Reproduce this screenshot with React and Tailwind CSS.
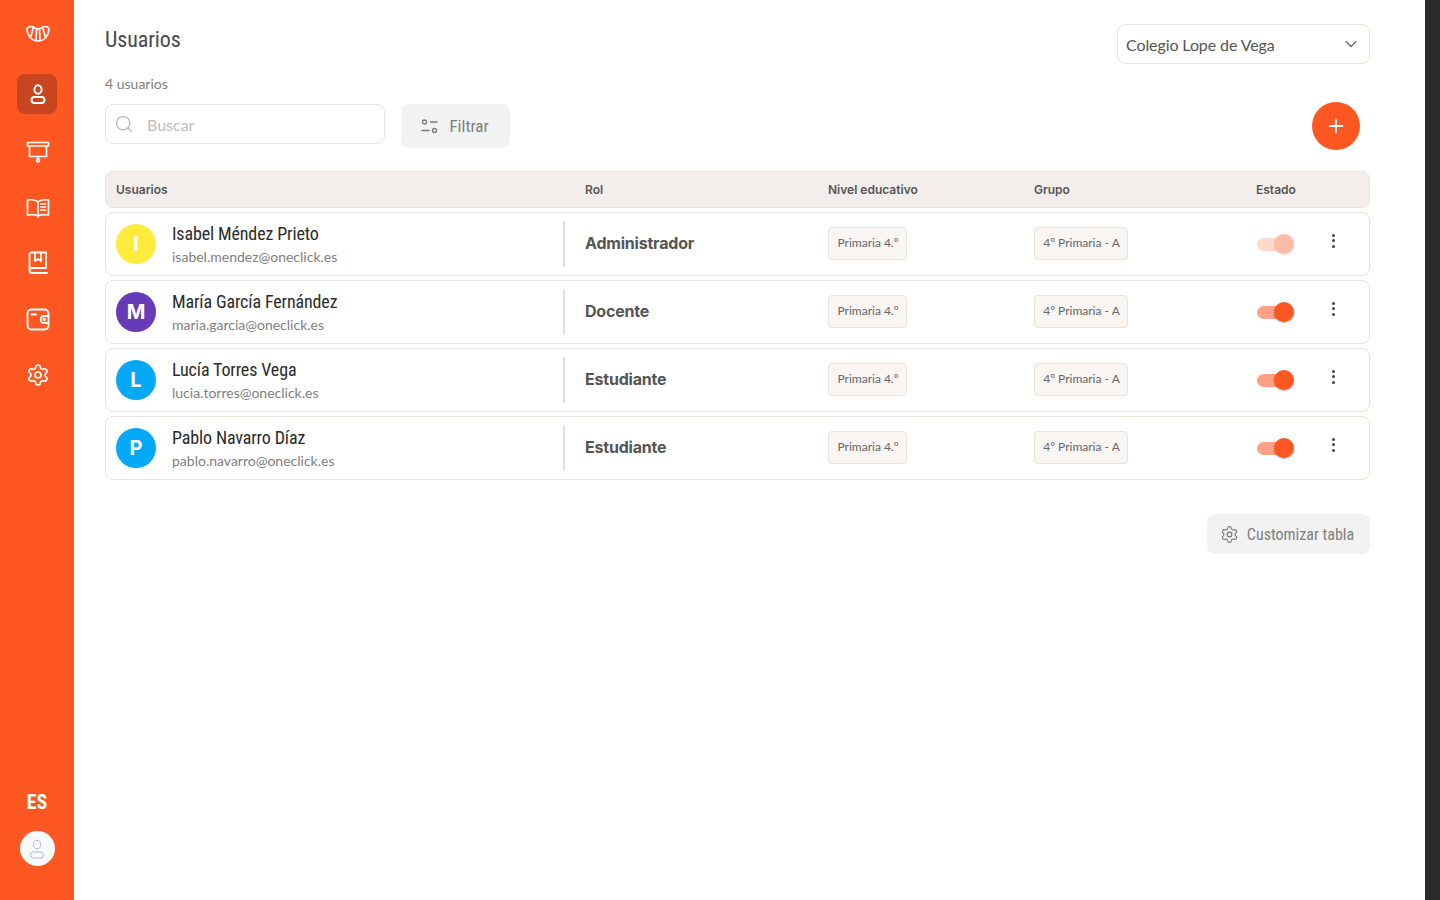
import { ChevronDown, Plus, Search, Settings } from "lucide-react";

const lato = "font-['Lato',sans-serif]";
const inter = "font-['Inter',sans-serif]";
const cond = "font-['Roboto',sans-serif] [font-stretch:75%]";

const users = [
  { initial: "I", name: "Isabel Méndez Prieto", email: "isabel.mendez@oneclick.es", role: "Administrador", color: "bg-[#FFEB3B]", off: true },
  { initial: "M", name: "María García Fernández", email: "maria.garcia@oneclick.es", role: "Docente", color: "bg-[#673AB7]" },
  { initial: "L", name: "Lucía Torres Vega", email: "lucia.torres@oneclick.es", role: "Estudiante", color: "bg-[#03A9F4]" },
  { initial: "P", name: "Pablo Navarro Díaz", email: "pablo.navarro@oneclick.es", role: "Estudiante", color: "bg-[#03A9F4]" },
];

function Logo() {
  return (
    <svg width="24" height="20" viewBox="0 0 24 20" fill="none" stroke="white" strokeWidth="1.7" strokeLinejoin="round" strokeLinecap="round">
      <path d="M1 4.5C2.5 2.5 5.5 2 7.5 3C10 5.5 14 5.5 16.5 3C18.5 2 21.5 2.5 23 4.5C23 11 18.5 17 12 17C5.5 17 1 11 1 4.5Z" />
      <path d="M7.5 3L5 12M10.5 5L10 16.5M13.5 5L14 16.5M16.5 3L19 12" />
    </svg>
  );
}

function UserIcon({ stroke = "white", width = 2 }) {
  return (
    <svg width="24" height="24" viewBox="0 0 24 24" fill="none" stroke={stroke} strokeWidth={width}>
      <ellipse cx="12" cy="7.5" rx="3.6" ry="4.2" />
      <rect x="5.5" y="15" width="13" height="6" rx="3" />
    </svg>
  );
}

function BoardIcon() {
  return (
    <svg width="24" height="24" viewBox="0 0 24 24" fill="none" stroke="white" strokeWidth="1.7" strokeLinejoin="round">
      <path d="M1.5 3.5H22.5V7H1.5Z" />
      <path d="M3.5 7V17.5H20.5V7" />
      <path d="M12 17.5V20" />
      <circle cx="12" cy="21.3" r="1.5" />
    </svg>
  );
}

function BookOpenIcon() {
  return (
    <svg width="24" height="24" viewBox="0 0 24 24" fill="none" stroke="white" strokeWidth="1.7" strokeLinejoin="round" strokeLinecap="round">
      <path d="M12 7C10 5 5 4.5 1.5 5V20C5 19.5 10 19.5 12 21C14 19.5 19 19.5 22.5 20V5C19 4.5 14 5 12 7Z" />
      <path d="M12 7V22" />
      <path d="M15 9H19.5M15 12H19.5M15 15H19.5" />
    </svg>
  );
}

function BookIcon() {
  return (
    <svg width="24" height="24" viewBox="0 0 24 24" fill="none" stroke="white" strokeWidth="1.8" strokeLinejoin="round" strokeLinecap="round">
      <path d="M3.5 19V3.5C3.5 2.4 4.4 1.5 5.5 1.5H20V17H6C4.5 17 3.5 18 3.5 19.5C3.5 21 4.5 22 6 22H21" />
      <path d="M9 1.5V10L12 8L15 10V1.5" />
    </svg>
  );
}

function WalletIcon() {
  return (
    <svg width="24" height="24" viewBox="0 0 24 24" fill="none" stroke="white" strokeWidth="1.8" strokeLinejoin="round" strokeLinecap="round">
      <rect x="1.5" y="2.5" width="21" height="20" rx="4" />
      <path d="M22.5 9H18C16.1 9 14.8 10.5 14.8 12.5C14.8 14.5 16.1 16 18 16H22.5" />
      <circle cx="18.3" cy="12.5" r="0.8" />
      <path d="M5.5 7.5H10" />
    </svg>
  );
}

function FilterIcon() {
  return (
    <svg width="20" height="20" viewBox="0 0 20 20" fill="none" stroke="#777" strokeWidth="1.3" strokeLinecap="round">
      <circle cx="4.5" cy="5" r="2" />
      <path d="M10.5 5H17" />
      <circle cx="14.5" cy="13.5" r="2" />
      <path d="M2 13.5H9" />
    </svg>
  );
}

function Toggle({ off }) {
  return (
    <div className={`relative h-[13px] w-[36px] rounded-full bg-[#FF9F85] ${off ? "opacity-40" : ""}`}>
      <div className="absolute right-[-1px] top-[-4px] h-[20px] w-[20px] rounded-full bg-[#FF5722] shadow-[0_1px_2px_rgba(0,0,0,0.3)]" />
    </div>
  );
}

function Dots() {
  return (
    <div className="flex flex-col gap-[2.5px]">
      <span className="h-[3px] w-[3px] rounded-full bg-[#444]" />
      <span className="h-[3px] w-[3px] rounded-full bg-[#444]" />
      <span className="h-[3px] w-[3px] rounded-full bg-[#444]" />
    </div>
  );
}

function Pill({ children, width }) {
  return (
    <span className={`mb-[2px] flex h-[33px] items-center justify-center rounded-[4px] border border-[#EBE3DA] bg-[#F8F5F2] pl-[1px] text-[12px] text-[#666] ${lato} ${width}`}>
      {children}
    </span>
  );
}

function Row({ user }) {
  return (
    <div className="flex h-[64px] items-center rounded-lg border border-[#EBE3DA] bg-white pl-[10px]">
      <div className="flex w-[447px] items-center">
        <div className={`flex h-10 w-10 items-center justify-center rounded-full text-[20px] font-bold text-white ${inter} ${user.color}`}>
          {user.initial}
        </div>
        <div className="ml-4">
          <div className={`text-[18px] leading-[24px] tracking-[-0.13px] text-[#2b2b2b] ${cond}`}>{user.name}</div>
          <div className={`mt-[1px] text-[14px] leading-[20px] text-[#808080] ${lato}`}>{user.email}</div>
        </div>
      </div>
      <div className="h-[46px] w-[2px] bg-[#E8E0D6]" />
      <div className={`mb-[2px] ml-5 w-[243px] text-[16px] font-bold tracking-[-0.2px] text-[#555] ${inter}`}>{user.role}</div>
      <div className="w-[206px]">
        <Pill width="w-[79px]">Primaria 4.º</Pill>
      </div>
      <div className="w-[222px]">
        <Pill width="w-[94px]">4º Primaria - A</Pill>
      </div>
      <div className="flex w-[76px] items-center pl-[1px]">
        <Toggle off={user.off} />
      </div>
      <div className="mb-[7px] flex items-center">
        <Dots />
      </div>
    </div>
  );
}

export default function App() {
  return (
    <div className="flex h-screen w-screen overflow-hidden bg-white">
      {/* Sidebar */}
      <aside className="flex w-[74px] shrink-0 flex-col items-center bg-[#FF5722] pb-[34px] pt-[24px]">
        <div className="ml-[1px]">
          <Logo />
        </div>
        <div className="mt-[30px] flex h-10 w-10 items-center justify-center rounded-lg bg-[#C8451F]">
          <div className="ml-[1px]">
            <UserIcon />
          </div>
        </div>
        <div className="ml-[1px] mt-[25px] flex flex-col items-center gap-8">
          <BoardIcon />
          <BookOpenIcon />
          <BookIcon />
          <WalletIcon />
          <Settings size={24} color="white" strokeWidth={1.7} />
        </div>
        <div className={`mt-auto text-[20px] font-bold leading-[24px] text-white ${cond}`}>ES</div>
        <div className="mt-[17px] flex h-[35px] w-[35px] items-center justify-center rounded-full bg-[#F8F9FB]">
          <UserIcon stroke="#B5B8BC" width={1} />
        </div>
      </aside>

      {/* Main */}
      <main className="flex-1 pl-[31px] pr-[55px] pt-[24px]">
        <div className="flex h-10 items-start justify-between">
          <h1 className={`text-[22px] leading-[32px] tracking-[-0.1px] text-[#4a4a4a] ${cond}`}>Usuarios</h1>
          <div className={`flex h-10 w-[253px] items-center justify-between rounded-lg border border-[#EBE3DA] pl-2 pr-[8px] text-[16px] text-[#555] ${lato}`}>
            <span className="pt-[2px] tracking-[-0.1px]">Colegio Lope de Vega</span>
            <ChevronDown size={20} color="#666" strokeWidth={1.5} />
          </div>
        </div>

        <div className={`mt-3 text-[14px] leading-4 text-[#808080] ${lato}`}>4 usuarios</div>

        {/* Toolbar */}
        <div className="mr-[10px] mt-[10px] flex items-start">
          <div className={`mt-[2px] flex h-10 w-[280px] items-center rounded-lg border border-[#EBE3DA] pl-[8px] text-[16px] text-[#BDBDBD] ${lato}`}>
            <Search size={20} color="#AFAFAF" strokeWidth={1.4} />
            <span className="ml-[13px] pt-[2px]">Buscar</span>
          </div>
          <div className={`ml-4 mt-[2px] flex h-11 w-[109px] items-center justify-center gap-[9px] rounded-lg bg-[#F2F2F2] pr-[2px] pt-[1px] text-[17px] text-[#808080] ${cond}`}>
            <FilterIcon />
            Filtrar
          </div>
          <div className="ml-auto flex h-12 w-12 items-center justify-center rounded-full bg-[#FF5722]">
            <Plus size={22} color="white" strokeWidth={2} />
          </div>
        </div>

        {/* Table */}
        <div className={`mt-[21px] flex h-[37px] items-center rounded-lg border border-[#EBE3DA] bg-[#F3EEEB] pl-[10px] text-[12px] font-semibold text-[#555] ${inter}`}>
          <span className="w-[469px]">Usuarios</span>
          <span className="w-[243px]">Rol</span>
          <span className="w-[206px]">Nivel educativo</span>
          <span className="w-[222px]">Grupo</span>
          <span>Estado</span>
        </div>
        <div className="mt-1 flex flex-col gap-1">
          {users.map((user) => (
            <Row key={user.email} user={user} />
          ))}
        </div>

        <div className="mt-[34px] flex justify-end">
          <div className={`flex h-10 w-[163px] items-center justify-center gap-2 rounded-lg bg-[#F2F2F2] pr-[3px] pt-[1px] text-[16px] text-[#808080] ${cond}`}>
            <Settings size={19} color="#777" strokeWidth={1.4} />
            Customizar tabla
          </div>
        </div>
      </main>

      <div className="w-[15px] shrink-0 bg-[#2B2B2B]" />
    </div>
  );
}
